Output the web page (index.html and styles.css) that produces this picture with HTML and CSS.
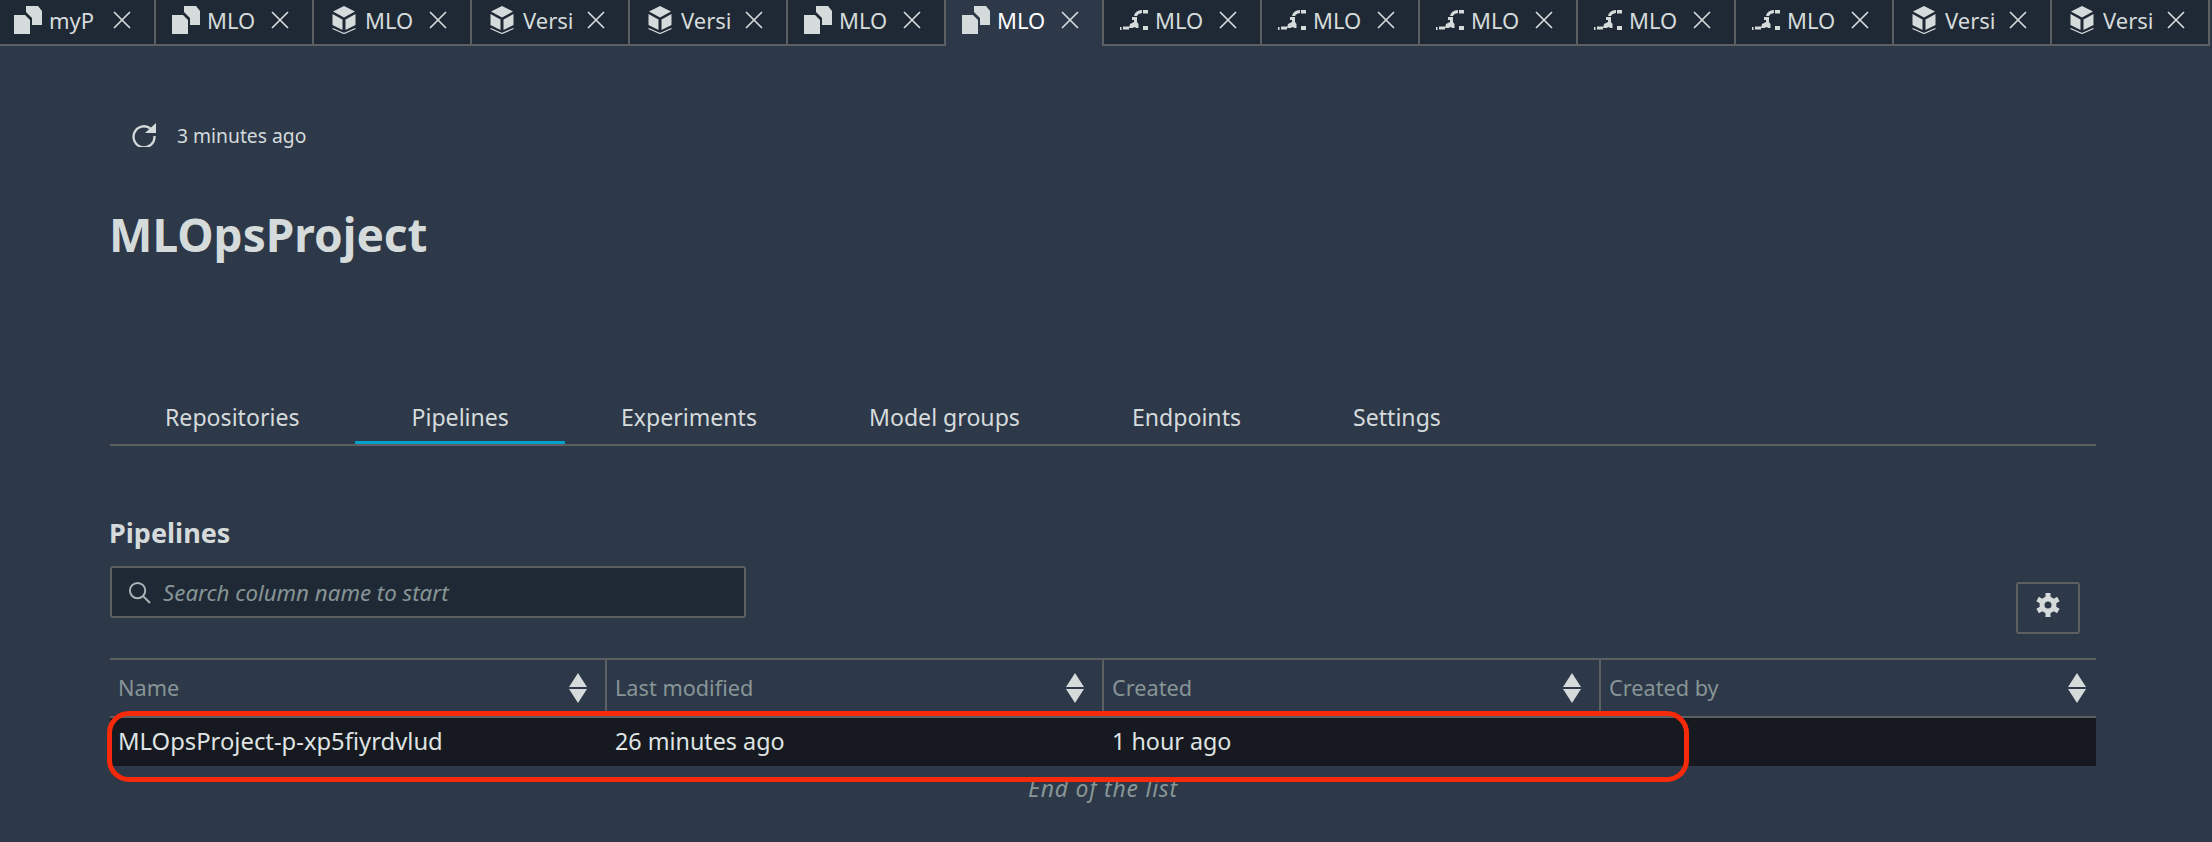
FILE: index.html
```html
<!DOCTYPE html>
<html>
	<head>
		<title>MLOpsProject</title>
		<link rel="stylesheet" href="styles.css">
	</head>

	<body>
		<svg class="defs" width="0" height="0">
			<symbol id="doc" viewBox="0 0 28 28">
				<path d="M0 9 H11 L16 14 V28 H0 Z"/>
				<path d="M12 0 H24 L28 5 V19 H18 V12 L12 6 Z"/>
			</symbol>
			<symbol id="box" viewBox="0 0 28 28">
				<path d="M14 0 L25 5.500 L14 11.500 L3 5.500 Z"/>
				<path d="M2.500 8 L12.500 13.500 V24 L2.500 19 Z"/>
				<path d="M25.500 8 L15.500 13.500 V24 L25.500 19 Z"/>
				<path d="M2.500 22.500 L14 27.500 L25.500 22.500" class="line"/>
			</symbol>
			<symbol id="flow" viewBox="0 0 28 28">
				<path d="M0 21h1.500v3H0zM3 20.500h6v3H3zM10 18l4-2v-2.500h3V16l1.500 2v4h-2l-2-1-2 1h-3.500zM23 20h5v4h-5zM23 4h5v3.500h-5z"/>
				<path d="M12 11h5v3h-5zM14 10q1-5.500 8-6v3q-4 .5-5 3z"/>
			</symbol>
			<symbol id="sort" viewBox="0 0 18 30">
				<path d="M9 0 L18 14 H0 Z"/>
				<path d="M0 16 H18 L9 30 Z"/>
			</symbol>
			<symbol id="close" viewBox="0 0 18 18">
				<path d="M1 1 L17 17 M17 1 L1 17"/>
			</symbol>
		</svg>

		<div class="tabs">
			<div class="tab"><svg class="tabIcon"><use href="#doc"/></svg><span class="tabName">myP</span><svg class="tabClose"><use href="#close"/></svg></div>
			<div class="tab"><svg class="tabIcon"><use href="#doc"/></svg><span class="tabName">MLO</span><svg class="tabClose"><use href="#close"/></svg></div>
			<div class="tab"><svg class="tabIcon"><use href="#box"/></svg><span class="tabName">MLO</span><svg class="tabClose"><use href="#close"/></svg></div>
			<div class="tab"><svg class="tabIcon"><use href="#box"/></svg><span class="tabName">Versi</span><svg class="tabClose"><use href="#close"/></svg></div>
			<div class="tab"><svg class="tabIcon"><use href="#box"/></svg><span class="tabName">Versi</span><svg class="tabClose"><use href="#close"/></svg></div>
			<div class="tab"><svg class="tabIcon"><use href="#doc"/></svg><span class="tabName">MLO</span><svg class="tabClose"><use href="#close"/></svg></div>
			<div class="tab active"><svg class="tabIcon"><use href="#doc"/></svg><span class="tabName">MLO</span><svg class="tabClose"><use href="#close"/></svg></div>
			<div class="tab"><svg class="tabIcon"><use href="#flow"/></svg><span class="tabName">MLO</span><svg class="tabClose"><use href="#close"/></svg></div>
			<div class="tab"><svg class="tabIcon"><use href="#flow"/></svg><span class="tabName">MLO</span><svg class="tabClose"><use href="#close"/></svg></div>
			<div class="tab"><svg class="tabIcon"><use href="#flow"/></svg><span class="tabName">MLO</span><svg class="tabClose"><use href="#close"/></svg></div>
			<div class="tab"><svg class="tabIcon"><use href="#flow"/></svg><span class="tabName">MLO</span><svg class="tabClose"><use href="#close"/></svg></div>
			<div class="tab"><svg class="tabIcon"><use href="#flow"/></svg><span class="tabName">MLO</span><svg class="tabClose"><use href="#close"/></svg></div>
			<div class="tab"><svg class="tabIcon"><use href="#box"/></svg><span class="tabName">Versi</span><svg class="tabClose"><use href="#close"/></svg></div>
			<div class="tab"><svg class="tabIcon"><use href="#box"/></svg><span class="tabName">Versi</span><svg class="tabClose"><use href="#close"/></svg></div>
		</div>

		<div class="page">
			<div class="refresh">
				<svg class="refreshIcon" viewBox="0 0 24 24"><path d="M18.500 5.500 A10.500 10.500 0 1 0 22.500 13"/><path class="solid" d="M24 0 V10 H13 Z"/></svg>
				<span>3 minutes ago</span>
			</div>

			<h1 class="title">MLOpsProject</h1>

			<div class="nav">
				<div class="navItem">Repositories</div>
				<div class="navItem current">Pipelines</div>
				<div class="navItem">Experiments</div>
				<div class="navItem">Model groups</div>
				<div class="navItem">Endpoints</div>
				<div class="navItem">Settings</div>
			</div>

			<h2 class="sectionTitle">Pipelines</h2>

			<div class="toolbar">
				<div class="search">
					<svg class="searchIcon" viewBox="0 0 24 24"><circle cx="10" cy="10" r="8"/><path d="M15.500 15.500 L23 23"/></svg>
					<span>Search column name to start</span>
				</div>
				<div class="settings">
					<svg class="gear" viewBox="0 0 24 24">
						<circle cx="12" cy="12" r="6" class="ring"/>
						<rect x="9.500" y="0" width="5" height="5"/>
						<rect x="9.500" y="0" width="5" height="5" transform="rotate(60 12 12)"/>
						<rect x="9.500" y="0" width="5" height="5" transform="rotate(120 12 12)"/>
						<rect x="9.500" y="0" width="5" height="5" transform="rotate(180 12 12)"/>
						<rect x="9.500" y="0" width="5" height="5" transform="rotate(240 12 12)"/>
						<rect x="9.500" y="0" width="5" height="5" transform="rotate(300 12 12)"/>
					</svg>
				</div>
			</div>

			<div class="table">
				<div class="headRow">
					<div class="headCell"><span>Name</span><svg class="sort"><use href="#sort"/></svg></div>
					<div class="headCell"><span>Last modified</span><svg class="sort"><use href="#sort"/></svg></div>
					<div class="headCell"><span>Created</span><svg class="sort"><use href="#sort"/></svg></div>
					<div class="headCell"><span>Created by</span><svg class="sort"><use href="#sort"/></svg></div>
				</div>
				<div class="bodyRow">
					<div class="bodyCell">MLOpsProject-p-xp5fiyrdvlud</div>
					<div class="bodyCell">26 minutes ago</div>
					<div class="bodyCell">1 hour ago</div>
					<div class="bodyCell"></div>
				</div>
				<!-- red annotation drawn over the row -->
				<div class="callout"></div>
			</div>
			<div class="endNote">End of the list</div>
		</div>
	</body>
</html>
```

FILE: styles.css
```css
* {
	box-sizing: border-box;
}

html, body {
	margin: 0;
	height: 100%;
}

body {
	background: #2d3849;
	color: #d5dbdb;
	font-family: "Noto Sans", sans-serif;
	font-size: 20px;
	overflow: hidden;
}

.defs {
	position: absolute;
}

.tabs {
	display: flex;
	height: 46px;
	margin-left: -2px;
}

.tab {
	width: 158px;
	flex: none;
	display: flex;
	align-items: center;
	padding: 0 0 4px 16px;
	background: #1f2935;
	border-right: 2px solid #5d6062;
	border-bottom: 2px solid #5d6062;
}

.tab.active {
	padding-bottom: 6px;
	background: #2d3849;
	border-bottom: none;
	color: #ffffff;
}

.tabIcon {
	width: 28px;
	height: 28px;
	flex: none;
	fill: #d5dbdb;
	stroke: none;
}

.tabName {
	width: 52px;
	margin-left: 7px;
	overflow: hidden;
	white-space: nowrap;
	font-size: 22px;
	line-height: 30px;
}

.tabClose {
	width: 18px;
	height: 18px;
	margin-left: 12px;
	flex: none;
	fill: none;
	stroke: #d5dbdb;
	stroke-width: 1.7;
}

#box .line {
	fill: none;
	stroke: #d5dbdb;
	stroke-width: 1.3;
}

.page {
	padding: 0 116px 0 110px;
}

.refresh {
	display: flex;
	align-items: center;
	gap: 21px;
	height: 26px;
	margin: 76px 0 0 22px;
	font-size: 19.300px;
}

.refreshIcon {
	width: 24px;
	height: 24px;
	fill: none;
	stroke: #d5dbdb;
	stroke-width: 2.300;
}

.refreshIcon .solid {
	fill: #d5dbdb;
	stroke: none;
}

.title {
	margin: 58px 0 0 -1px;
	font-size: 46px;
	line-height: 56px;
	font-weight: 700;
}

.nav {
	display: flex;
	margin-top: 122px;
	height: 62px;
	border-bottom: 2px solid #5d6062;
}

.navItem {
	padding: 17px 56px 0 56px;
	font-size: 23.100px;
	white-space: nowrap;
}

.navItem:first-child {
	margin-left: -1px;
}

.navItem.current {
	border-bottom: 3px solid #00a1c9;
}

.sectionTitle {
	margin: 71px 0 0 -1px;
	font-size: 27px;
	line-height: 32px;
	font-weight: 700;
}

.toolbar {
	display: flex;
	justify-content: space-between;
	align-items: flex-start;
	margin-top: 17px;
}

.search {
	display: flex;
	align-items: center;
	width: 636px;
	height: 52px;
	padding-left: 16px;
	gap: 12px;
	background: #1f2935;
	border: 2px solid #5d6062;
	border-radius: 3px;
	color: #879596;
	font-style: italic;
	font-size: 22.300px;
}

.searchIcon {
	width: 23px;
	height: 23px;
	fill: none;
	stroke: #aab7b8;
	stroke-width: 2;
}

.settings {
	display: flex;
	align-items: center;
	justify-content: center;
	width: 64px;
	height: 52px;
	padding-bottom: 6px;
	margin: 16px 16px 0 0;
	border: 2px solid #5d6062;
	border-radius: 3px;
}

.gear {
	width: 24px;
	height: 24px;
	fill: #d5dbdb;
}

.gear .ring {
	fill: none;
	stroke: #d5dbdb;
	stroke-width: 5;
}

.table {
	position: relative;
	margin-top: 24px;
}

.headRow, .bodyRow {
	display: grid;
	grid-template-columns: 497px 497px 497px 1fr;
}

.headRow {
	height: 60px;
	border-top: 2px solid #5d6062;
	border-bottom: 2px solid #5d6062;
}

.headCell {
	display: flex;
	align-items: center;
	justify-content: space-between;
	padding: 0 18px 1px 8px;
	border-right: 2px solid #5d6062;
	color: #879596;
	font-size: 21.700px;
}

.headCell:last-child {
	padding-right: 10px;
	border-right: none;
}

.sort {
	width: 18px;
	height: 30px;
	fill: #d5dbdb;
}

.bodyRow {
	height: 48px;
	background: #16191f;
	align-items: center;
}

.bodyCell {
	padding: 0 0 2px 8px;
	font-size: 23.300px;
	color: #dfe3e3;
}

.bodyCell:first-child {
	font-size: 23.800px;
}

.callout {
	position: absolute;
	left: -3px;
	top: 53px;
	width: 1582px;
	height: 71px;
	border: 5px solid #f52a0a;
	border-radius: 22px;
}

.endNote {
	margin-top: 6px;
	text-align: center;
	color: #879596;
	font-style: italic;
	font-size: 23px;
	letter-spacing: 0.750px;
	line-height: 32px;
}
```
